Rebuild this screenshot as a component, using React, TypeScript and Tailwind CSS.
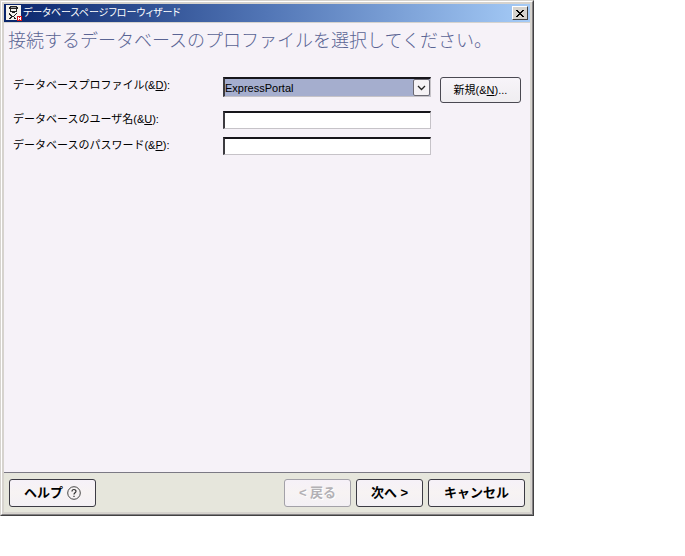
import { useState, type ReactNode } from "react"
import clsx from "clsx"

type FooterButtonProps = {
  children: ReactNode;
  className?: string;
  disabled?: boolean;
}

function FooterButton({ children, className, disabled }: FooterButtonProps) {
  return (
    <button
      type="button"
      disabled={disabled}
      className={clsx(
        "flex h-7 items-center justify-center gap-1 rounded-[3px] border bg-linear-to-b from-[#f6f1f8] via-[#f7f3f3] to-[#f3f0f5] text-[13px] leading-4 font-bold whitespace-nowrap",
        disabled ? "border-[#a3a1a8] text-[#b3b1b5] [text-shadow:1px_1px_0_#fff]" : "border-[#3c3b44] text-black",
        className
      )}
    >
      {children}
    </button>
  )
}

function AppIcon() {
  return (
    <svg viewBox="0 0 16 16" className="h-4 w-4 shrink-0" shapeRendering="crispEdges" aria-hidden="true">
      <rect width="15" height="15" fill="#f4f2ec" />
      <path d="M3 2h1V1h7v1h1v2h-1v1h-1V4H5v1H4V4H3z" fill="#222" />
      <path d="M5 2h5v1H5z" fill="#999" />
      <path d="M4 5h1v1h5V5h1v2H9v1H6V7H4z" fill="#222" />
      <path d="M3 8h1v1h1v1h1v1h1v1H6v1H5v1H3v-1h1v-1h1v-1H4v-1H3z" fill="#222" />
      <path d="M10 8h1v1h-1v1H9v1H8v1H7v-1h1v-1h1V9h1zM8 12h1v1h1v1H8z" fill="#222" />
      <rect x="11" y="11" width="5" height="5" fill="#d4141c" />
      <path d="M12 12h1v3h-1zM14 12h1v3h-1zM13 13h1v1h-1z" fill="#fff" />
    </svg>
  )
}

const fieldClass =
  "w-full rounded-none border border-t-2 border-l-2 border-t-[#17161b] border-l-[#3c3b40] border-r-[#c6c3c8] border-b-[#c6c3c8] text-[11px] leading-4 text-black outline-none"
const rowClass = "grid grid-cols-[210px_208px_auto] justify-start"

function App() {
  const [profile, setProfile] = useState("ExpressPortal")
  const [user, setUser] = useState("")
  const [password, setPassword] = useState("")

  return (
    <div className="min-h-screen bg-white font-['Liberation_Sans','Noto_Sans_CJK_JP',sans-serif]">
      <div className="w-full max-w-[534px] border border-t-[#d6d3ce] border-l-[#d6d3ce] border-r-[#424142] border-b-[#424142]">
        <div className="border border-t-white border-l-white border-r-[#848284] border-b-[#848284] bg-[#d6d3ce] p-0.5">
          {/* Title bar */}
          <header className="flex h-[18px] items-center bg-linear-to-r/srgb from-[#08246b] via-[#5276b6] to-[#a5cbf7] pr-0.5 pl-0.5 text-white">
            <AppIcon />
            <h1 className="ml-px flex-1 text-[10px] leading-4 whitespace-nowrap [font-feature-settings:'palt']">
              データベースページフローウィザード
            </h1>
            <button
              type="button"
              aria-label="閉じる"
              className="flex h-3.5 w-4 items-center justify-center border border-t-white border-l-white border-r-[#424142] border-b-[#424142] bg-[#d6d3ce]"
            >
              <svg viewBox="0 0 8 7" className="h-[7px] w-2" shapeRendering="crispEdges" aria-hidden="true">
                <path
                  d="M0 0h2v1h1v1h2V1h1V0h2v1H7v1H6v1H5v1h1v1h1v1h1v1H6V6H5V5H3v1H2v1H0V6h1V5h1V4h1V3H2V2H1V1H0z"
                  fill="#000"
                />
              </svg>
            </button>
          </header>

          <form onSubmit={(e) => e.preventDefault()}>
            <div className="mt-px min-h-[449px] bg-[#f6f2f8] px-1 pt-1">
              <h2 className="text-[18px] leading-7 font-light whitespace-nowrap text-[#5a6494]">
                接続するデータベースのプロファイルを選択してください。
              </h2>

              <div className="mt-[22px] flex flex-col gap-2 pl-[5px] text-[11px] leading-4 text-black">
                <div className={rowClass}>
                  <label htmlFor="profile">
                    データベースプロファイル(&amp;<u>D</u>):
                  </label>
                  <div className="relative h-5">
                    <select
                      id="profile"
                      value={profile}
                      onChange={(e) => setProfile(e.target.value)}
                      className={clsx(fieldClass, "block h-full appearance-none bg-[#a5aece]")}
                    >
                      <option>ExpressPortal</option>
                    </select>
                    <span className="pointer-events-none absolute top-0.5 right-px flex h-[17px] w-[17px] items-center justify-center rounded-[2px] border border-[#6b6973] bg-[#f5f2f5]">
                      <svg viewBox="0 0 9 6" className="h-1.5 w-[9px]" aria-hidden="true">
                        <path d="M1 1l3.500 3.500L8 1" fill="none" stroke="#222" strokeWidth="1.300" />
                      </svg>
                    </span>
                  </div>
                  <button
                    type="button"
                    className="ml-[9px] h-[26px] w-[81px] rounded-[3px] border border-[#4a4952] bg-linear-to-b from-[#f7f4f9] to-[#efedf0] text-[11px] leading-4"
                  >
                    新規(&amp;<u>N</u>)...
                  </button>
                </div>

                <div className={rowClass}>
                  <label htmlFor="user">
                    データベースのユーザ名(&amp;<u>U</u>):
                  </label>
                  <input
                    id="user"
                    type="text"
                    value={user}
                    onChange={(e) => setUser(e.target.value)}
                    className={clsx(fieldClass, "h-[18px] bg-white")}
                  />
                </div>

                <div className={rowClass}>
                  <label htmlFor="password">
                    データベースのパスワード(&amp;<u>P</u>):
                  </label>
                  <input
                    id="password"
                    type="password"
                    value={password}
                    onChange={(e) => setPassword(e.target.value)}
                    className={clsx(fieldClass, "h-[18px] bg-white")}
                  />
                </div>
              </div>
            </div>

            {/* Wizard buttons */}
            <footer className="flex border-t border-[#7b7984] bg-[#e6e6dc] px-[5px] pt-1.5 pb-[5px]">
              <FooterButton className="w-[87px]">
                ヘルプ
                <svg viewBox="0 0 14 14" className="h-3.5 w-3.5" fill="none" stroke="#333" aria-hidden="true">
                  <circle cx="7" cy="7" r="6.300" strokeWidth="0.900" />
                  <path d="M5 5.500C5 2.900 9 2.900 9 5.300C9 6.800 7 6.800 7 8.500M7 9.700v1.300" strokeWidth="1.200" />
                </svg>
              </FooterButton>
              <div className="ml-auto flex gap-[5px]">
                <FooterButton className="w-[67px]" disabled>
                  &lt; 戻る
                </FooterButton>
                <FooterButton className="w-[67px]">次へ &gt;</FooterButton>
                <FooterButton className="w-[97px]">キャンセル</FooterButton>
              </div>
            </footer>
          </form>
        </div>
      </div>
    </div>
  )
}

export default App
